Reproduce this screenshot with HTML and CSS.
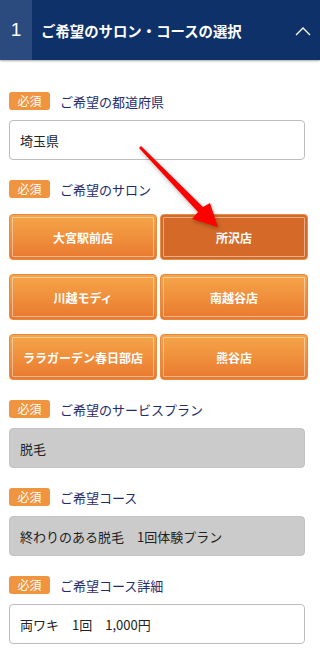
FILE: index.html
```html
<!DOCTYPE html>
<html lang="ja">
  <head>
    <meta charset="utf-8">
    <title>ご希望のサロン・コースの選択</title>
    <link rel="stylesheet" href="styles.css">
  </head>
  <body>
    <div class="step-head">
      <div class="step-num">1</div>
      <div class="step-title">ご希望のサロン・コースの選択</div>
      <svg class="chevron" width="16" height="9" viewBox="0 0 16 9"><path d="M1 8 L8 1 L15 8" fill="none" stroke="#fff" stroke-width="1.3"/></svg>
    </div>

    <div class="form">
      <div class="field">
        <div class="label"><span class="req">必須</span>ご希望の都道府県</div>
        <div class="input">埼玉県</div>
      </div>

      <div class="field">
        <div class="label"><span class="req">必須</span>ご希望のサロン</div>
        <div class="salons">
          <div class="salon">大宮駅前店</div>
          <div class="salon selected">所沢店</div>
          <div class="salon">川越モディ</div>
          <div class="salon">南越谷店</div>
          <div class="salon">ララガーデン春日部店</div>
          <div class="salon">熊谷店</div>
        </div>
      </div>

      <div class="field">
        <div class="label"><span class="req">必須</span>ご希望のサービスプラン</div>
        <div class="input disabled">脱毛</div>
      </div>

      <div class="field">
        <div class="label"><span class="req">必須</span>ご希望コース</div>
        <div class="input disabled">終わりのある脱毛　1回体験プラン</div>
      </div>

      <div class="field">
        <div class="label"><span class="req">必須</span>ご希望コース詳細</div>
        <div class="input">両ワキ　1回　1,000円</div>
      </div>
    </div>

    <!-- annotation arrow over the salon buttons -->
    <svg class="pointer" width="320" height="651" viewBox="0 0 320 651">
      <polygon points="141,146 203,207 210,203 218,227 192,219 198,212 139,148" fill="#ff0000"/>
    </svg>
  </body>
</html>
```

FILE: styles.css
```css
body {
  margin: 0;
  background: #fff;
  font-family: "Noto Sans CJK JP", "Liberation Sans", sans-serif;
  color: #222;
}

.step-head {
  display: flex;
  align-items: center;
  height: 60px;
  background: #0e3169;
  color: #fff;
  box-shadow: 0 1px 2px rgba(0, 0, 0, .35);
}
.step-num {
  width: 32px;
  height: 100%;
  display: flex;
  align-items: center;
  justify-content: center;
  background: #2b4a7d;
  font-family: "Liberation Sans", sans-serif;
  font-size: 19px;
}
.step-title {
  flex: 1;
  padding-left: 9px;
  font-size: 14.4px;
  font-weight: bold;
}
.chevron {
  margin: 2px 9px 0 0;
}

.form {
  padding: 32px 15px 0 9px;
}
.field {
  margin-bottom: 20px;
}
.label {
  display: flex;
  align-items: center;
  height: 18px;
  font-size: 13px;
  color: #1e2c6a;
  margin-bottom: 10px;
}
.req {
  width: 41px;
  height: 18px;
  line-height: 18px;
  margin-right: 10px;
  border-radius: 3px;
  background: #f0943f;
  color: #fff;
  font-size: 12px;
  text-align: center;
}
.input {
  height: 40px;
  box-sizing: border-box;
  border: 1px solid #bdbdbd;
  border-radius: 4px;
  padding-left: 10px;
  display: flex;
  align-items: center;
  font-size: 13px;
  color: #222;
}
.disabled {
  background: #cbcbcb;
  border-color: #c4c4c4;
}

.salons {
  display: grid;
  grid-template-columns: 1fr 1fr;
  column-gap: 3px;
  row-gap: 14px;
  margin: 16px -3px 18px 0;
}
.salon {
  height: 46px;
  box-sizing: border-box;
  display: flex;
  align-items: center;
  justify-content: center;
  border: 1px solid #e9873c;
  border-radius: 4px;
  background: linear-gradient(#f6a64a, #e9792f);
  outline: 1px solid rgba(255, 255, 255, .45);
  outline-offset: -4px;
  color: #fff;
  font-size: 12px;
  font-weight: bold;
}
.selected {
  background: #d56a28;
  border-color: #e58f4c;
}

.pointer {
  position: absolute;
  left: 0;
  top: 0;
  filter: drop-shadow(1px 2px 2px rgba(0, 0, 0, .3));
}
```
